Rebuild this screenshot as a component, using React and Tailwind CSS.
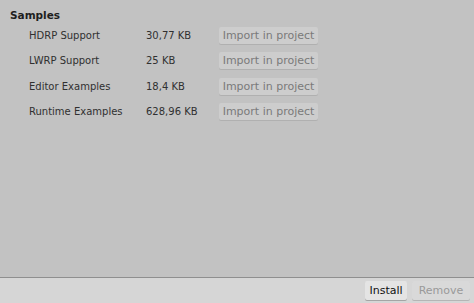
const rows = [
  { name: 'HDRP Support', size: '30,77 KB' },
  { name: 'LWRP Support', size: '25 KB' },
  { name: 'Editor Examples', size: '18,4 KB' },
  { name: 'Runtime Examples', size: '628,96 KB' },
]

export default function App() {
  return (
    <div
      className="w-[474px] h-[303px] flex flex-col bg-[#c2c2c2] text-[11px] text-[#1e1e1e]"
      style={{ fontFamily: '"DejaVu Sans", Verdana, sans-serif' }}
    >
      <div className="flex-1 pl-[10px] pt-[7px]">
        <div className="font-bold text-[10.5px] leading-[16px] h-[16px]">Samples</div>
        <div className="flex flex-col gap-[8.3px] mt-[4px]">
          {rows.map((r) => (
            <div key={r.name} className="flex items-center h-[17px]">
              <div className="w-[136px] pl-[19px] text-[10px] text-[#303030]">{r.name}</div>
              <div className="w-[73px] text-[10px] text-[#303030]">{r.size}</div>
              <button className="w-[99px] h-[17px] rounded-[2px] bg-[#cdcdcd] text-[#7a7a7a] shadow-[0_1px_0_#b0b0b0] leading-none">
                Import in project
              </button>
            </div>
          ))}
        </div>
      </div>
      <div className="h-[26px] border-t border-[#8f8f8f] bg-[#d6d6d6] flex items-center justify-end gap-[5px] pr-[4px]">
        <button className="w-[42px] h-[19px] rounded-[2px] bg-[#e4e4e4] text-[#111] shadow-[0_1px_0_#a5a5a5] leading-none">
          Install
        </button>
        <button className="w-[58px] h-[19px] rounded-[2px] bg-[#d9d9d9] text-[#9a9a9a] shadow-[0_1px_0_#b5b5b5] leading-none">
          Remove
        </button>
      </div>
    </div>
  )
}
